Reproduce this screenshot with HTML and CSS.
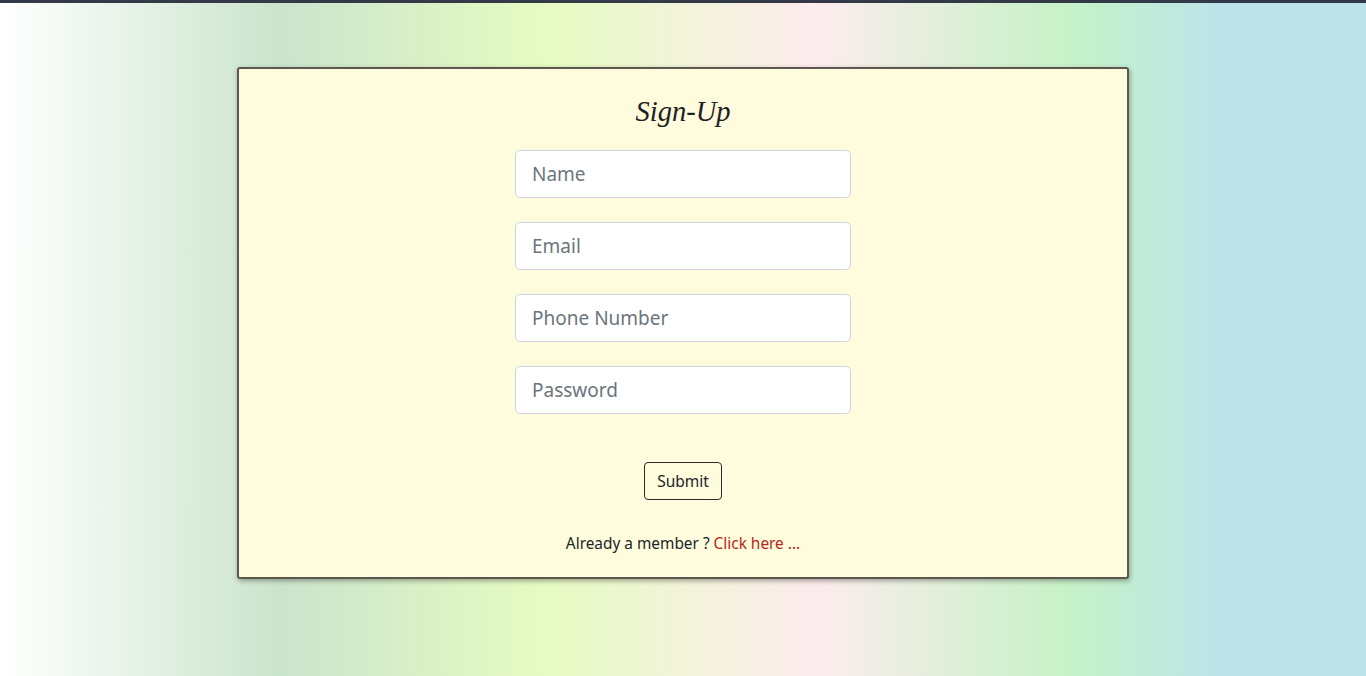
FILE: index.html
```html
<!DOCTYPE html>
<html lang="en">
<head>
<meta charset="utf-8">
<title>Sign-Up</title>
<link rel="stylesheet" href="styles.css">
</head>
<body>
<div class="topbar"></div>
<main class="page">
  <form class="card">
    <h1 class="title">Sign-Up</h1>
    <div class="fields">
      <input class="field" type="text" placeholder="Name">
      <input class="field" type="email" placeholder="Email">
      <input class="field" type="tel" placeholder="Phone Number">
      <input class="field" type="password" placeholder="Password">
    </div>
    <button class="submit" type="button">Submit</button>
    <p class="member">Already a member ? <a class="link" href="#">Click here ...</a></p>
  </form>
</main>
</body>
</html>
```

FILE: styles.css
```css
html, body {
  margin: 0;
  padding: 0;
  height: 100%;
}
body {
  font-family: "Noto Sans", "Open Sans", sans-serif;
  color: #212529;
  background: linear-gradient(to right,
    #ffffff 0px,
    #cbe4cd 280px,
    #e6fbc2 545px,
    #fdecee 815px,
    #c6f2c7 1070px,
    #bce4ea 1220px,
    #bce4ea 1366px);
  min-height: 676px;
}
.topbar {
  height: 3px;
  background: #333946;
}
.page {
  display: flex;
  justify-content: center;
  padding-top: 64px;
}
.card {
  box-sizing: border-box;
  width: 892px;
  height: 512px;
  background: #fffcdd;
  border: 2px solid #5c5850;
  border-radius: 3px;
  box-shadow: 1px 2px 5px rgba(60, 60, 50, 0.45);
  display: flex;
  flex-direction: column;
  align-items: center;
  padding-top: 24px;
}
.title {
  margin: 0;
  font-family: "Liberation Serif", serif;
  font-style: italic;
  font-weight: normal;
  font-size: 28.5px;
  line-height: 38px;
  color: #1e2124;
}
.fields {
  display: flex;
  flex-direction: column;
  gap: 24px;
  margin-top: 19px;
}
.field {
  box-sizing: border-box;
  width: 336px;
  height: 48px;
  padding: 8px 16px;
  font-family: inherit;
  font-size: 19px;
  color: #495057;
  background: #fff;
  border: 1px solid #ced4da;
  border-radius: 5px;
  outline: none;
}
.field::placeholder {
  color: #6c757d;
}
.submit {
  margin-top: 48px;
  box-sizing: border-box;
  height: 38px;
  padding: 0 12px;
  font-family: inherit;
  font-size: 15.5px;
  color: #212529;
  background: transparent;
  border: 1px solid #2a2a2a;
  border-radius: 4px;
}
.member {
  margin: 32px 0 0;
  font-size: 15.4px;
  line-height: 24px;
}
.link {
  color: #b5261c;
  text-decoration: none;
}
```
